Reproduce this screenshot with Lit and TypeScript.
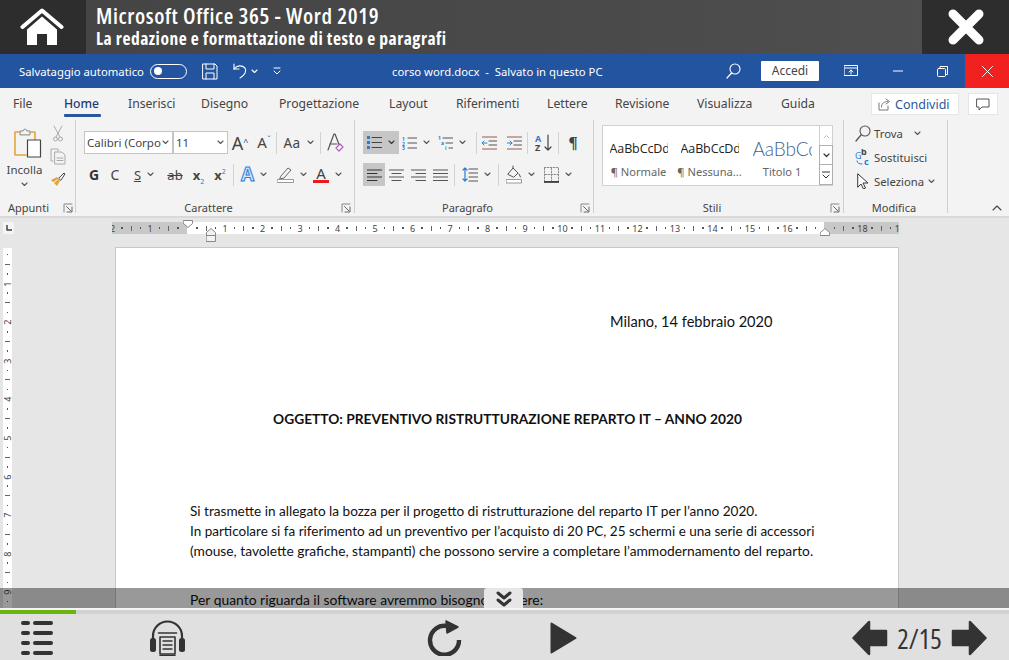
import { LitElement, html, css, svg } from "lit";
import { customElement } from "lit/decorators.js";

const ic = (w: number, h: number, body: unknown, cls = "") =>
  html`<svg class=${cls} width=${w} height=${h} viewBox="0 0 ${w} ${h}" fill="none" stroke-linecap="round" stroke-linejoin="round">${body}</svg>`;
const chev = (c = "#555") => ic(7, 5, svg`<path d="M1 1l2.5 2.5L6 1" stroke=${c} stroke-width="1.1"/>`, "chev");
const launcher = () => ic(10, 10, svg`<path d="M1 9V1h8" stroke="#888" stroke-width="1"/><path d="M9 4v5H4M3.5 3.5L8 8" stroke="#666" stroke-width="1"/>`);
const lines = (x1: number, x2: number, ys: number[], c = "#555", sw = 1.2) =>
  ys.map((y) => svg`<path d="M${x1} ${y}H${x2}" stroke=${c} stroke-width=${sw}/>`);

const Icons = {
  home: ic(44, 38, svg`<path d="M2.5 19L22 2.5 41.5 19" stroke="#fff" stroke-width="4"/><path d="M7 21.5L22 8.5l15 13V37H27V26H17v11H7z" fill="#fff"/>`),
  close: ic(38, 38, svg`<path d="M6 6l26 26M32 6L6 32" stroke="#fff" stroke-width="9"/>`),
  save: ic(16, 17, svg`<path d="M1 1h12l2 2v13H1z M4 1v5h8V1 M4 16v-6h8v6" stroke="#fff" stroke-width="1"/>`),
  undo: ic(16, 16, svg`<path d="M2 1v5h5" stroke="#fff" stroke-width="1.1"/><path d="M2 6c3-4 8-4 11-1 2 3 0 7-5 10" stroke="#fff" stroke-width="1.1"/>`),
  custom: ic(8, 8, svg`<path d="M1 1h6M1 4l3 3 3-3" stroke="#fff" stroke-width="1"/>`),
  search: ic(15, 16, svg`<circle cx="9" cy="6" r="5" stroke="#fff" stroke-width="1.1"/><path d="M5.5 10L1 15" stroke="#fff" stroke-width="1.2"/>`),
  display: ic(14, 12, svg`<rect x=".5" y=".5" width="13" height="10" stroke="#fff"/><path d="M1 3h12" stroke="#fff"/><path d="M7 9V5M5 7l2-2 2 2" stroke="#fff"/>`),
  min: ic(10, 2, svg`<path d="M0 1h10" stroke="#fff" stroke-width="1"/>`),
  restore: ic(11, 11, svg`<rect x=".5" y="2.5" width="8" height="8" rx="1" stroke="#fff"/><path d="M3 2.5V.5h7.5v8H8.5" stroke="#fff"/>`),
  x: ic(11, 11, svg`<path d="M.5.5l10 10M10.5.5l-10 10" stroke="#fff" stroke-width="1"/>`),
  share: ic(13, 13, svg`<path d="M1 5v7h9V8" stroke="#777"/><path d="M3.5 9c0-4 3-5.500 6-5.500M8 1l3.500 2.500L8 6" stroke="#777"/>`),
  comment: ic(14, 13, svg`<path d="M1 1h12v8H6l-3 3V9H1z" stroke="#555"/>`),
  paste: ic(28, 30, svg`<path d="M6 4H1v23h11" stroke="#e8a33c" stroke-width="1.6"/><path d="M16 4h5v8" stroke="#e8a33c" stroke-width="1.6"/><path d="M6 6.500V3h3l1.500-2h1L13 3h3v3.500z" stroke="#888" fill="#f3f3f3"/><rect x="13.500" y="12" width="13" height="17" fill="#fff" stroke="#444" stroke-width="1.200"/>`),
  cut: ic(10, 17, svg`<path d="M1 1l6 11M9 1L3 12" stroke="#aaa"/><circle cx="2.500" cy="14" r="2" stroke="#aaa"/><circle cx="7.500" cy="14" r="2" stroke="#aaa"/>`),
  copy: ic(16, 17, svg`<path d="M3 13H1V1h7v2" stroke="#aaa"/><path d="M5 4h7l3 3v9H5z M7 10h6M7 12.500h6" stroke="#aaa"/>`),
  brush: ic(16, 16, svg`<path d="M1 9l6-3 3 4-3 5z" fill="#e8a33c"/><path d="M9 7l5-5 1 1-4 6z" stroke="#444" fill="#fff"/><path d="M3 12l4-3" stroke="#fff"/>`),
  growA: html`<span class="big-a">A<sup>^</sup></span>`,
  shrinkA: html`<span class="mid-a">A<sup class="blue">ˇ</sup></span>`,
  clearFmt: ic(17, 19, svg`<path d="M1 17L7 1h1l5 13" stroke="#555" stroke-width="1.200"/><path d="M3 11h7" stroke="#555"/><path d="M9 15l4-4 3 3-4 4z" fill="#fff" stroke="#b55ac0" stroke-width="1.200"/>`),
  textA: html`<span class="effect-a">A</span>`,
  highlight: ic(17, 17, svg`<path d="M4 10l7-8 3 2-7 8-4 1z" stroke="#666"/><rect x=".5" y="13.500" width="16" height="3" fill="#fff" stroke="#999"/>`),
  fontColor: html`<span class="red-a">A</span>`,
  bullets: ic(15, 13, svg`<g fill="#2b7cd3"><rect y="0" width="3" height="3"/><rect y="5" width="3" height="3"/><rect y="10" width="3" height="3"/></g>${lines(5, 15, [1.5, 6.5, 11.5], "#444")}`),
  numbered: ic(15, 14, svg`${lines(6, 15, [2, 7, 12], "#555")}<text x="0" y="4.500" class="tiny">1</text><text x="0" y="9.500" class="tiny">2</text><text x="0" y="14" class="tiny">3</text>`),
  multi: ic(15, 14, svg`${lines(5, 15, [2], "#555")}${lines(8, 15, [7], "#555")}${lines(11, 15, [12], "#555")}<text x="0" y="4" class="tiny">1</text><text x="3" y="9" class="tiny">a</text><text x="7" y="14" class="tiny">i</text>`),
  outdent: ic(15, 14, svg`${lines(0, 15, [1, 13], "#9a5a50")}${lines(7, 15, [5, 9], "#555")}<path d="M5 7H0M2 5L0 7l2 2" stroke="#2b7cd3"/>`),
  indent: ic(15, 14, svg`${lines(0, 15, [1, 13], "#9a5a50")}${lines(7, 15, [5, 9], "#555")}<path d="M0 7h5M3 5l2 2-2 2" stroke="#2b7cd3"/>`),
  sort: ic(18, 18, svg`<path d="M14 1v15M11 13l3 3 3-3" stroke="#444" stroke-width="1.200"/><text x="1" y="8" class="az">A</text><text x="1" y="17" class="zz">Z</text>`),
  left: ic(15, 12, svg`${lines(0, 15, [1, 8], "#333")}${lines(0, 10, [4.500, 11.500], "#333")}`),
  center: ic(15, 12, svg`${lines(0, 15, [1, 8], "#555")}${lines(3, 12, [4.500, 11.500], "#555")}`),
  right: ic(15, 12, svg`${lines(0, 15, [1, 8], "#555")}${lines(5, 15, [4.500, 11.500], "#555")}`),
  justify: ic(15, 12, svg`${lines(0, 15, [1, 4.500, 8, 11.500], "#555")}`),
  spacing: ic(16, 15, svg`<path d="M3 1v13M1 3l2-2 2 2M1 12l2 2 2-2" stroke="#2b7cd3" stroke-width="1.200"/>${lines(7, 16, [2, 6, 10, 14], "#555")}`),
  fill: ic(16, 19, svg`<path d="M2 9l5-6 5 5-4 4z" stroke="#555"/><path d="M7 3V1" stroke="#555"/><path d="M13 9l1.500 3" stroke="#555"/><rect x=".5" y="14.500" width="15" height="3.500" fill="#fff" stroke="#999"/>`),
  border: ic(15, 16, svg`<rect x=".5" y=".5" width="14" height="14" stroke="#888" stroke-dasharray="1.500 1.500"/><path d="M7.500 1v14M1 7.500h13" stroke="#888" stroke-dasharray="1.500 1.500"/><path d="M0 15h15" stroke="#222" stroke-width="1.400"/>`),
  scrollUp: ic(7, 5, svg`<path d="M1 4l2.500-2.500L6 4" stroke="#bbb"/>`),
  scrollDown: ic(7, 5, svg`<path d="M1 1l2.500 2.500L6 1" stroke="#333" stroke-width="1.200"/>`),
  more: ic(8, 8, svg`<path d="M0 1h8" stroke="#333"/><path d="M1 4l3 3 3-3" stroke="#333"/>`),
  find: ic(16, 17, svg`<circle cx="10" cy="6" r="5" stroke="#555" stroke-width="1.100"/><path d="M6 10l-5 6" stroke="#555" stroke-width="1.300"/>`),
  replace: ic(15, 16, svg`<text x="6" y="6" class="repb">b</text><text x="9" y="15.500" class="repc">c</text><text x="0" y="10" class="repa">G</text><path d="M2 12c0 2 2 3 5 3" stroke="#2b7cd3"/>`),
  cursor: ic(12, 16, svg`<path d="M1 1l10 9H6l2.500 5-2 1L4 11l-3 3z" stroke="#333" fill="#fff"/>`),
  collapse: ic(10, 6, svg`<path d="M1 5l4-4 4 4" stroke="#444" stroke-width="1.100"/>`),
  cornerL: ic(6, 6, svg`<path d="M1 0v5h5" stroke="#444" stroke-width="1.500" stroke-linecap="butt"/>`),
  down: ic(10, 8, svg`<path d="M.5.5h9v3L5 7.500.5 3.500z" stroke="#888" fill="#fff"/>`),
  up: ic(10, 8, svg`<path d="M.5 7.500h9v-3L5 .5.500 4.500z" stroke="#888" fill="#fff"/>`),
  hang: ic(10, 14, svg`<path d="M.5 7.500v-3L5 .5l4.500 4v3z" stroke="#888" fill="#f2f2f2"/><rect x=".5" y="7.500" width="9" height="6" stroke="#888" fill="#f2f2f2"/>`),
  dbl: ic(16, 16, svg`<path d="M2 2l6 5 6-5M2 9l6 5 6-5" stroke="#333" stroke-width="3"/>`),
  list: ic(32, 34, svg`${[2, 12, 22, 32].map((y) => svg`<path d="M2 ${y}h5M14 ${y}h16" stroke="#333" stroke-width="4"/>`)}`),
  phones: ic(35, 36, svg`<path d="M3 21v-5a14.500 14.500 0 0 1 29 0v5" stroke="#333" stroke-width="2.200"/><rect x="0" y="18" width="6" height="14" rx="2.500" fill="#333"/><rect x="29" y="18" width="6" height="14" rx="2.500" fill="#333"/><path d="M8.500 13h18M10 17h15v17H10z" stroke="#333" stroke-width="1.600"/><path d="M13 21h9M13 25h9M13 29h9M10 35.500h15" stroke="#333" stroke-width="1.400"/>`),
  reload: ic(36, 36, svg`<path d="M21 6A14.500 14.500 0 1 0 33 20" stroke="#333" stroke-width="4.400" stroke-linecap="butt"/><path d="M20 1l12 6-11 6z" fill="#333" stroke="#333" stroke-width="1.500"/>`),
  play: ic(27, 32, svg`<path d="M1.500 1.500L25.500 16 1.500 30.500z" fill="#333" stroke="#333" stroke-width="2"/>`),
  prev: ic(36, 36, svg`<path d="M1.500 18L17 2v9h17v14H17v9z" fill="#333" stroke="#333" stroke-width="2.500"/>`),
  next: ic(36, 36, svg`<path d="M34.500 18L19 2v9H2v14h17v9z" fill="#333" stroke="#333" stroke-width="2.500"/>`),
};

const sep = html`<span class="sep"></span>`;
const tick = (i: number, skip: number[]) => {
  if (skip.includes(i)) return html`<span class="cell"></span>`;
  if (i % 4 === 0) return html`<span class="cell num">${Math.abs(i / 4)}</span>`;
  if (Math.abs(i % 4) === 2) return html`<span class="cell"><b class="mark"></b></span>`;
  return html`<span class="cell"><b class="dot"></b></span>`;
};
const range = (a: number, b: number) => Array.from({ length: b - a + 1 }, (_, k) => a + k);

@customElement("app-root")
export class AppRoot extends LitElement {
  static styles = css`
    :host { display: block; width: 1009px; height: 660px; overflow: hidden; font-family: "Noto Sans", sans-serif; background: #e0e0e0; }
    svg { display: block; flex: none; }
    .app { display: flex; flex-direction: column; height: 660px; }

    .top { height: 54px; display: flex; background: linear-gradient(90deg, #444 0%, #4a4a4a 60%, #505050 100%); flex: none; }
    .home, .closer { background: #2d2d2d; display: flex; align-items: center; justify-content: center; }
    .home { width: 86px; }
    .home svg { margin: -1px 2px 0 0; }
    .closer { width: 87px; margin-left: auto; }
    .titles { padding: 1px 0 0 10px; color: #fff; font-family: "Open Sans", sans-serif; font-stretch: 75%; }
    .t1 { font-size: 22px; line-height: 28px; font-weight: 600; white-space: nowrap; letter-spacing: .6px; }
    .t2 { font-size: 17.500px; line-height: 19px; font-weight: 700; white-space: nowrap; letter-spacing: .5px; }

    .bar { height: 34px; background: #23549f; color: #fff; display: grid; align-items: center; font-size: 11.300px; white-space: nowrap; flex: none;
      grid-template-columns: 19px 131px 37px 15px 16px 14px 16px 3px 7px 15px 8px 111px 209px 125px 15px 20px 58px 25px 14px 35px 10px 34px 11px 17px 44px; }
    .bar > .auto { grid-column: 2; }
    .toggle { width: 37px; height: 15px; border: 1.200px solid #fff; border-radius: 8px; box-sizing: border-box; display: flex; align-items: center; padding-left: 3px; }
    .toggle i { width: 8px; height: 8px; background: #fff; border-radius: 50%; }
    .accedi { background: #fff; height: 20px; line-height: 20px; text-align: center; border-radius: 1px; font-size: 12px; color: #444; }
    .red { background: #f0211e; height: 34px; display: flex; align-items: center; justify-content: center; }

    .tabs { height: 32px; background: #f3f3f3; display: flex; align-items: center; font-size: 12.200px; color: #444; flex: none; position: relative; }
    .tab { height: 32px; line-height: 31px; position: relative; white-space: nowrap; flex: none; }
    .tab.on { color: #1f3f73; font-weight: 500; }
    .tab.on::after { content: ""; position: absolute; left: 0; right: 0; top: 26px; height: 2.500px; background: #2b579a; border-radius: 1px; }
    .t-file { margin-left: 13px; width: 51px; } .t-home { width: 37px; margin-right: 27px; } .t-ins { width: 73px; } .t-dis { width: 78px; }
    .t-pro { width: 110px; } .t-lay { width: 67px; } .t-rif { width: 91px; } .t-let { width: 68px; } .t-rev { width: 82px; } .t-vis { width: 84px; } .t-gui { width: 90px; }
    .share { width: 88px; height: 22px; background: #fff; border: 1px solid #e6e6e6; box-sizing: border-box; display: flex; align-items: center; gap: 4px; padding-left: 6px; color: #2b579a; font-size: 12.500px; }
    .cmt { width: 30px; height: 22px; margin-left: 9px; background: #fff; border: 1px solid #e6e6e6; box-sizing: border-box; display: flex; align-items: center; justify-content: center; }

    .ribbon { height: 98px; background: #f3f3f3; border-bottom: 2px solid #d9d9d9; display: flex; flex: none; font-size: 11px; color: #444; position: relative; box-sizing: border-box; }
    .group { flex: none; height: 93px; display: flex; flex-direction: column; border-right: 1px solid #cfcfcf; box-sizing: border-box; position: relative; }
    .g1 { width: 76px; } .g2 { width: 279px; } .g3 { width: 239px; } .g4 { width: 250px; } .g5 { width: 104px; }
    .body { height: 80px; flex: none; box-sizing: border-box; }
    .label { height: 17px; display: flex; align-items: center; font-size: 11px; color: #444; padding-right: 3px; box-sizing: border-box; }
    .label span { flex: 1; text-align: center; }
    .g1 .label { padding-right: 2px; }
    .g1 .label span { padding-right: 6px; }
    .g1 .body { display: grid; grid-template-columns: 46px 22px; }
    .pastebox { display: flex; flex-direction: column; align-items: center; padding-top: 7px; font-size: 11.500px; line-height: 15px; padding-left: 3px; }
    .pastebox svg:first-child { margin: 1px 0 4px 11px; align-self: flex-start; }
    .pastebox .chev { margin-top: 5px; }
    .smalls { display: flex; flex-direction: column; align-items: center; padding-top: 5px; gap: 6px; margin-left: 1px; }
    .rows { padding: 11px 0 0 8px; display: flex; flex-direction: column; gap: 9px; }
    .row { display: grid; height: 23px; align-items: center; }
    .row > * { justify-self: center; }
    .cellx { display: flex; align-items: center; gap: 6px; height: 23px; justify-content: center; }
    .sel { background: #c6c6c6; width: 100%; }
    .sep { width: 1px; height: 22px; background: #d2d2d2; display: block; }
    .r-f1 { grid-template-columns: 89px 55px 24px 24px 1px 43px 1px 29px; }
    .r-f2 { grid-template-columns: 20px 22px 36px 26px 21px 22px 2px 1px 40px 36px 35px; }
    .r-p1 { grid-template-columns: 36px 34px 37px 6px 1px 25px 25px 1px 30px 1px 28px; }
    .r-p2 { grid-template-columns: 22px 22px 22px 22px 3px 1px 43px 1px 42px 34px; }
    .combo { width: 100%; height: 23px; background: #fff; border: 1px solid #c4c4c4; box-sizing: border-box; display: flex; align-items: center; justify-content: space-between; padding: 0 3px 0 2px; font-size: 11.500px; white-space: nowrap; overflow: hidden; }
    .big-a { font-size: 18px; color: #444; line-height: 1; } .mid-a { font-size: 15px; color: #444; line-height: 1; }
    sup { font-size: 9px; vertical-align: 5px; line-height: 0; } .blue { color: #2b7cd3; }
    .aa { font-size: 13.500px; letter-spacing: .5px; }
    .bold { font-weight: 700; font-size: 14px; color: #333; } .plain { font-size: 14px; }
    .u { text-decoration: underline; font-size: 13px; }
    .ab { font-size: 13px; position: relative; display: block; line-height: 14px; text-decoration: line-through; }
    .xs { font-weight: 700; font-size: 13px; color: #444; }
    sub { font-size: 7px; color: #2b7cd3; line-height: 0; font-weight: 400; } .xs sup { font-size: 7px; vertical-align: 6px; font-weight: 400; }
    .effect-a { font-size: 19px; font-weight: 700; color: #cfe6fb; -webkit-text-stroke: 1px #2b7cd3; line-height: 1; }
    .red-a { font-size: 15px; color: #444; border-bottom: 3px solid #e81c1c; line-height: 14px; padding: 0 3px; display: block; }
    .pil { font-size: 17px; font-weight: 700; color: #444; font-family: "Liberation Serif", serif; }
    .tiny { font-size: 5px; fill: #2b7cd3; font-family: "Noto Sans", sans-serif; font-weight: 700; }
    .az { font-size: 9px; fill: #2b7cd3; font-weight: 700; font-family: "Noto Sans", sans-serif; }
    .zz { font-size: 9px; fill: #444; font-weight: 700; font-family: "Noto Sans", sans-serif; }
    .repa { font-size: 9px; fill: #2b7cd3; } .repb { font-size: 9px; fill: #444; font-weight: 700; } .repc { font-size: 9px; fill: #2b7cd3; font-weight: 700; }

    .gallery { margin: 5px 0 0 8px; width: 231px; height: 61px; background: #fff; border: 1px solid #d0d0d0; box-sizing: border-box; display: grid; grid-template-columns: 71px 71px 74px 1fr; }
    .style { display: flex; flex-direction: column; align-items: center; overflow: hidden; padding-top: 13px; }
    .style b { font-weight: 400; font-size: 12.500px; color: #222; line-height: 20px; height: 20px; white-space: nowrap; width: 58px; overflow: hidden; display: block; font-family: "Open Sans", sans-serif; letter-spacing: -.1px; }
    .style b.h { font-size: 19px; color: #44618f; font-family: "Lato", sans-serif; font-weight: 300; width: 59px; }
    .style span { font-size: 11.100px; color: #666; line-height: 16px; margin-top: 5px; white-space: nowrap; }
    .scroll { display: grid; grid-template-rows: 20px 19px 20px; margin-right: -1px; }
    .scroll i { border-left: 1px solid #d0d0d0; display: flex; align-items: center; justify-content: center; }
    .scroll i + i { border: 1px solid #b0b0b0; background: #fff; margin: -1px 0 0 0; }

    .find { padding: 1px 0 0 11px; display: flex; flex-direction: column; }
    .find div { height: 24px; display: flex; align-items: center; gap: 4px; font-size: 11.300px; white-space: nowrap; }
    .ic-w { width: 15px; display: flex; justify-content: center; }
    .gap-chev { margin-left: 7px; display: block; }
    .collapse { position: absolute; right: 7px; bottom: 5px; }

    .ruler-row { height: 29px; background: #e6e6e6; display: flex; flex: none; position: relative; }
    .corner { margin: 4px 0 0 3px; width: 11px; height: 12px; background: #f4f4f4; display: flex; align-items: center; justify-content: center; }
    .hruler { margin: 4px 0 0 98px; width: 787px; height: 12px; overflow: hidden; display: flex; background: linear-gradient(90deg, #c8c8c8 75px, #fff 75px, #fff 712px, #c8c8c8 712px); }
    .hruler .track { display: flex; margin-left: -4.200px; height: 12px; }
    .cell { width: 9.375px; flex: none; display: flex; align-items: center; justify-content: center; font-size: 9px; line-height: 1; color: #444; }
    .dot { display: block; width: 1.500px; height: 1.500px; background: #555; }
    .mark { display: block; width: 1px; height: 5px; background: #666; }
    .mk1 { position: absolute; left: 183px; top: 2px; } .mk2 { position: absolute; left: 206px; top: 10px; } .mk3 { position: absolute; left: 820px; top: 10px; }

    .doc { height: 361px; display: flex; background: #e6e6e6; flex: none; position: relative; overflow: hidden; }
    .vruler { margin: 1px 0 0 3px; width: 9px; height: 360px; background: #fff; overflow: hidden; }
    .vtrack { margin-top: -7.800px; display: flex; flex-direction: column; }
    .vtrack .cell { width: 9px; height: 9.650px; }
    .vtrack .num { writing-mode: vertical-rl; transform: rotate(180deg); }
    .vtrack .mark { width: 5px; height: 1px; }
    .page { margin-left: 103px; width: 784px; background: #fff; border: 1px solid #c8c8c8; border-bottom: 0; box-sizing: border-box; padding: 64px 73px 0 74px; font-family: "Lato", sans-serif; font-size: 13.500px; line-height: 20px; color: #111; height: 400px; }
    .page p { margin: 0; white-space: nowrap; }
    .p-date { margin-left: 420px !important; font-size: 14.600px; }
    .p-obj { margin-top: 77px !important; text-align: center; font-weight: 700; font-size: 13.750px; }
    .p-body { margin-top: 72px !important; }
    .l1 { font-size: 13.600px; } .l3 { font-size: 13.770px; }
    .p-more { margin-top: 29px !important; font-size: 13.900px; }
    .shade { position: absolute; left: 0; right: 0; bottom: 0; height: 20px; background: rgba(0, 0, 0, .4); }
    .handle { position: absolute; left: 484px; top: 0; width: 39px; height: 21px; background: #e6e6e6; border-radius: 3px 3px 0 0; display: flex; align-items: center; justify-content: center; }

    .progress { height: 4px; background: #d2d2d2; border-top: 2px solid #f4f4f4; flex: none; }
    .progress i { display: block; width: 76px; height: 4px; background: #6db30f; }
    .foot { flex: 1; background: #e0e0e0; display: flex; align-items: center; padding-top: 2px; box-sizing: border-box; }
    .f-list { margin-left: 21px; } .f-ph { margin-left: 97px; } .f-re { margin-left: 241px; } .f-play { margin-left: 88px; } .f-prev { margin-left: 275px; }
    .count { font-family: "Open Sans", sans-serif; font-stretch: 75%; font-size: 27px; color: #333; width: 63px; text-align: center; }
  `;

  render() {
    return html`<div class="app">
      <header class="top">
        <div class="home">${Icons.home}</div>
        <div class="titles">
          <div class="t1">Microsoft Office 365 - Word 2019</div>
          <div class="t2">La redazione e formattazione di testo e paragrafi</div>
        </div>
        <div class="closer">${Icons.close}</div>
      </header>

      <div class="bar">
        <span class="auto">Salvataggio automatico</span>
        <span class="toggle"><i></i></span>
        <span></span>${Icons.save}<span></span>${Icons.undo}<span></span>${chev("#fff")}<span></span>${Icons.custom}<span></span>
        <span>corso word.docx&nbsp; -&nbsp; Salvato in questo PC</span>
        <span></span>${Icons.search}<span></span>
        <span class="accedi">Accedi</span>
        <span></span>${Icons.display}<span></span>${Icons.min}<span></span>${Icons.restore}<span></span>
        <span class="red">${Icons.x}</span>
      </div>

      <nav class="tabs">
        <span class="tab t-file">File</span><span class="tab on t-home">Home</span><span class="tab t-ins">Inserisci</span>
        <span class="tab t-dis">Disegno</span><span class="tab t-pro">Progettazione</span><span class="tab t-lay">Layout</span>
        <span class="tab t-rif">Riferimenti</span><span class="tab t-let">Lettere</span><span class="tab t-rev">Revisione</span>
        <span class="tab t-vis">Visualizza</span><span class="tab t-gui">Guida</span>
        <span class="share">${Icons.share}Condividi</span><span class="cmt">${Icons.comment}</span>
      </nav>

      <section class="ribbon">
        <div class="group g1">
          <div class="body">
            <div class="pastebox">${Icons.paste}<span>Incolla</span>${chev()}</div>
            <div class="smalls">${Icons.cut}${Icons.copy}${Icons.brush}</div>
          </div>
          <div class="label"><span>Appunti</span>${launcher()}</div>
        </div>
        <div class="group g2">
          <div class="body rows">
            <div class="row r-f1">
              <span class="combo"><span>Calibri (Corpo</span>${chev()}</span>
              <span class="combo"><span>11</span>${chev()}</span>
              ${Icons.growA}${Icons.shrinkA}${sep}
              <span class="cellx"><span class="aa">Aa</span>${chev()}</span>${sep}${Icons.clearFmt}
            </div>
            <div class="row r-f2">
              <span class="bold">G</span><span class="plain">C</span>
              <span class="cellx"><span class="u">S</span>${chev()}</span>
              <span class="ab">ab</span>
              <span class="xs">x<sub>2</sub></span><span class="xs">x<sup class="blue">2</sup></span>
              <span></span>${sep}
              <span class="cellx">${Icons.textA}${chev()}</span>
              <span class="cellx">${Icons.highlight}${chev()}</span>
              <span class="cellx">${Icons.fontColor}${chev()}</span>
            </div>
          </div>
          <div class="label"><span>Carattere</span>${launcher()}</div>
        </div>
        <div class="group g3">
          <div class="body rows">
            <div class="row r-p1">
              <span class="cellx sel">${Icons.bullets}${chev("#333")}</span>
              <span class="cellx">${Icons.numbered}${chev()}</span>
              <span class="cellx">${Icons.multi}${chev()}</span>
              <span></span>${sep}${Icons.outdent}${Icons.indent}${sep}${Icons.sort}${sep}<span class="pil">¶</span>
            </div>
            <div class="row r-p2">
              <span class="cellx sel">${Icons.left}</span>${Icons.center}${Icons.right}${Icons.justify}
              <span></span>${sep}
              <span class="cellx">${Icons.spacing}${chev()}</span>${sep}
              <span class="cellx">${Icons.fill}${chev()}</span>
              <span class="cellx">${Icons.border}${chev()}</span>
            </div>
          </div>
          <div class="label"><span>Paragrafo</span>${launcher()}</div>
        </div>
        <div class="group g4">
          <div class="body">
            <div class="gallery">
              <div class="style"><b>AaBbCcDdEe</b><span>¶ Normale</span></div>
              <div class="style"><b>AaBbCcDdEe</b><span>¶ Nessuna...</span></div>
              <div class="style"><b class="h">AaBbCcDd</b><span>Titolo 1</span></div>
              <div class="scroll"><i>${Icons.scrollUp}</i><i>${Icons.scrollDown}</i><i>${Icons.more}</i></div>
            </div>
          </div>
          <div class="label"><span>Stili</span>${launcher()}</div>
        </div>
        <div class="group g5">
          <div class="body find">
            <div><span class="ic-w">${Icons.find}</span>Trova<span class="gap-chev">${chev()}</span></div>
            <div><span class="ic-w">${Icons.replace}</span>Sostituisci</div>
            <div><span class="ic-w">${Icons.cursor}</span>Seleziona${chev()}</div>
          </div>
          <div class="label"><span>Modifica</span></div>
        </div>
        <span class="collapse">${Icons.collapse}</span>
      </section>

      <div class="ruler-row">
        <span class="corner">${Icons.cornerL}</span>
        <div class="hruler"><div class="track">${range(-8, 76).map((i) => tick(i, [0, 68]))}</div></div>
        <span class="mk1">${Icons.down}</span><span class="mk2">${Icons.hang}</span><span class="mk3">${Icons.up}</span>
      </div>

      <main class="doc">
        <div class="vruler"><div class="vtrack">${range(0, 40).map((i) => tick(i, [0]))}</div></div>
        <article class="page">
          <p class="p-date">Milano, 14 febbraio 2020</p>
          <p class="p-obj">OGGETTO: PREVENTIVO RISTRUTTURAZIONE REPARTO IT – ANNO 2020</p>
          <p class="p-body"><span class="l1">Si trasmette in allegato la bozza per il progetto di ristrutturazione del reparto IT per l’anno 2020.</span><br />
          In particolare si fa riferimento ad un preventivo per l’acquisto di 20 PC, 25 schermi e una serie di accessori<br />
          <span class="l3">(mouse, tavolette grafiche, stampanti) che possono servire a completare l’ammodernamento del reparto.</span></p>
          <p class="p-more">Per quanto riguarda il software avremmo bisogno di avere:</p>
        </article>
        <div class="shade"><div class="handle">${Icons.dbl}</div></div>
      </main>

      <div class="progress"><i></i></div>
      <footer class="foot">
        <span class="f-list">${Icons.list}</span>
        <span class="f-ph">${Icons.phones}</span>
        <span class="f-re">${Icons.reload}</span>
        <span class="f-play">${Icons.play}</span>
        <span class="f-prev">${Icons.prev}</span>
        <span class="count">2/15</span>
        <span>${Icons.next}</span>
      </footer>
    </div>`;
  }
}
